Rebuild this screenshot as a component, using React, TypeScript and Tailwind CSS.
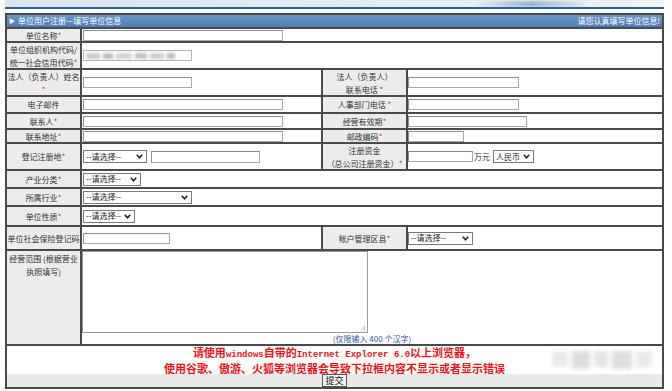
import React from "react";

const Star = () => <span className="text-[#e8202a]">*</span>;

const Chevron = () => (
  <svg width="7" height="5" viewBox="0 0 7 5" className="shrink-0">
    <polyline points="0.8,0.8 3.5,3.8 6.2,0.8" fill="none" stroke="#222" strokeWidth="1.6" />
  </svg>
);

function Input({ cls }: { cls: string }) {
  return <div className={"h-[11px] border border-[#a9a9a9] border-t-[#8f8f8f] border-l-[#8f8f8f] bg-white " + cls} />;
}

function Select({ cls, text = "--请选择--" }: { cls: string; text?: string }) {
  return (
    <div
      className={
        "h-[13px] border border-[#7a7a7a] bg-white flex items-center justify-between pl-[2px] pr-[3px] text-[8px] leading-none text-[#222] " +
        cls
      }
    >
      <span>{text}</span>
      <Chevron />
    </div>
  );
}

function L1({ children, top = false }: { children: React.ReactNode; top?: boolean }) {
  return (
    <div
      className={
        "w-[73px] shrink-0 bg-[#ececec] flex justify-center text-center leading-[13px] whitespace-nowrap " +
        (top ? "items-start pt-[1px]" : "items-center")
      }
    >
      <div>{children}</div>
    </div>
  );
}

function L2({ children }: { children: React.ReactNode }) {
  return (
    <div className="w-[85px] shrink-0 border-l-2 border-[#4a4a4a] bg-[#ececec] flex items-center justify-center text-center leading-[13px] whitespace-nowrap">
      <div>{children}</div>
    </div>
  );
}

function V1({ children, full = false }: { children?: React.ReactNode; full?: boolean }) {
  return (
    <div
      className={
        "border-l-2 border-[#4a4a4a] bg-white flex items-center pl-px " + (full ? "flex-1" : "w-[241px] shrink-0")
      }
    >
      {children}
    </div>
  );
}

function V2({ children }: { children?: React.ReactNode }) {
  return <div className="flex-1 border-l-2 border-[#4a4a4a] bg-white flex items-center">{children}</div>;
}

function Row({ h, children }: { h: string; children: React.ReactNode }) {
  return <div className={"flex border-t-2 border-[#4a4a4a] " + h}>{children}</div>;
}

export default function App() {
  return (
    <div
      className="w-[672px] h-[391px] bg-white text-[8px] text-[#333] overflow-hidden"
      style={{ fontFamily: '"Noto Sans CJK SC", "Noto Sans", sans-serif' }}
    >
      {/* top banner */}
      <div className="ml-[5px] w-[659px]">
        <div className="relative h-[7px] bg-gradient-to-r from-[#d9e6f2] via-[#e3ecf5] to-[#eef3f8] overflow-hidden">
          <div className="absolute left-[470px] top-[1px] w-[110px] h-[6px] rounded-full bg-gradient-to-r from-[#e8eef5] via-[#9fb4c9] to-[#dfe9f2] blur-[1px]" />
        </div>
        <div className="h-[2px] bg-[#2e5f97]" />
        <div className="h-[4px] bg-white" />
      </div>

      {/* table */}
      <div className="ml-[5px] w-[659px] border-2 border-[#4a4a4a]">
        <div className="h-[12px] bg-gradient-to-b from-[#6b96c8] to-[#4e7db6] flex items-center justify-between px-[2px] text-white leading-none">
          <span className="flex items-center gap-[3px]">
            <span className="text-[6px]">▶</span>
            <span>单位用户注册—填写单位信息</span>
          </span>
          <span>请您认真填写单位信息!</span>
        </div>

        <Row h="h-[14px]">
          <L1>
            单位名称<Star />
          </L1>
          <V1 full>
            <Input cls="w-[200px]" />
          </V1>
        </Row>

        <Row h="h-[27px]">
          <L1>
            单位组织机构代码/
            <br />
            统一社会信用代码<Star />
          </L1>
          <V1 full>
            <div className="relative h-[11px] w-[109px] border border-[#b5b5b5] bg-white overflow-hidden">
              <div className="absolute left-[2px] top-[2px] flex gap-[3px] blur-[1.5px]">
                <div className="w-[14px] h-[6px] bg-[#c9c9c9]" />
                <div className="w-[10px] h-[6px] bg-[#bdbdbd]" />
                <div className="w-[16px] h-[6px] bg-[#d2d2d2]" />
                <div className="w-[12px] h-[6px] bg-[#c2c2c2]" />
                <div className="w-[14px] h-[6px] bg-[#cfcfcf]" />
                <div className="w-[8px] h-[6px] bg-[#bcbcbc]" />
              </div>
            </div>
          </V1>
        </Row>

        <Row h="h-[27px]">
          <L1>
            法人（负责人）姓名
            <br />
            <Star />
          </L1>
          <V1>
            <Input cls="w-[109px]" />
          </V1>
          <L2>
            法人（负责人）
            <br />
            联系电话 <Star />
          </L2>
          <V2>
            <Input cls="w-[111px]" />
          </V2>
        </Row>

        <Row h="h-[17px]">
          <L1>电子邮件</L1>
          <V1>
            <Input cls="w-[200px]" />
          </V1>
          <L2>
            人事部门电话 <Star />
          </L2>
          <V2>
            <Input cls="w-[111px]" />
          </V2>
        </Row>

        <Row h="h-[16px]">
          <L1>
            联系人<Star />
          </L1>
          <V1>
            <Input cls="w-[200px]" />
          </V1>
          <L2>
            经营有效期<Star />
          </L2>
          <V2>
            <Input cls="w-[119px]" />
          </V2>
        </Row>

        <Row h="h-[14px]">
          <L1>
            联系地址<Star />
          </L1>
          <V1>
            <Input cls="w-[200px]" />
          </V1>
          <L2>
            邮政编码<Star />
          </L2>
          <V2>
            <Input cls="w-[56px]" />
          </V2>
        </Row>

        <Row h="h-[27px]">
          <L1>
            登记注册地<Star />
          </L1>
          <V1>
            <div className="flex items-center gap-[4px]">
              <Select cls="w-[64px]" />
              <Input cls="w-[109px] h-[12px]" />
            </div>
          </V1>
          <L2>
            注册资金
            <br />
            （总公司注册资金）<Star />
          </L2>
          <V2>
            <div className="flex items-center">
              <Input cls="w-[65px]" />
              <span className="ml-px">万元</span>
              <Select cls="w-[41px] ml-[3px]" text="人民币" />
            </div>
          </V2>
        </Row>

        <Row h="h-[18px]">
          <L1>
            产业分类<Star />
          </L1>
          <V1 full>
            <Select cls="w-[58px]" />
          </V1>
        </Row>

        <Row h="h-[18px]">
          <L1>
            所属行业<Star />
          </L1>
          <V1 full>
            <Select cls="w-[109px]" />
          </V1>
        </Row>

        <Row h="h-[20px]">
          <L1>
            单位性质<Star />
          </L1>
          <V1 full>
            <Select cls="w-[52px]" />
          </V1>
        </Row>

        <Row h="h-[24px]">
          <L1>单位社会保险登记码</L1>
          <V1>
            <Input cls="w-[87px]" />
          </V1>
          <L2>
            帐户管理区县<Star />
          </L2>
          <V2>
            <Select cls="w-[65px]" />
          </V2>
        </Row>

        <Row h="h-[95px]">
          <L1 top>
            经营范围 (根据营业
            <br />
            执照填写)
          </L1>
          <div className="flex-1 border-l-2 border-[#4a4a4a] bg-white flex flex-col">
            <div className="relative w-[286px] h-[82px] border border-[#9a9a9a] bg-white">
              <svg width="6" height="6" viewBox="0 0 6 6" className="absolute right-[1px] bottom-[1px]">
                <line x1="5.5" y1="1" x2="1" y2="5.5" stroke="#999" strokeWidth="0.8" />
                <line x1="5.5" y1="3.5" x2="3.5" y2="5.5" stroke="#999" strokeWidth="0.8" />
              </svg>
            </div>
            <div className="text-center text-[#3350a8] leading-[10px] mt-[1px]">(仅限输入 400 个汉字)</div>
          </div>
        </Row>

        <div className="relative h-[30px] border-t-2 border-[#4a4a4a] bg-white flex flex-col items-center justify-center text-[11px] font-bold text-[#e8141c] leading-[13px]">
          <div>
            请使用
            <span className="text-[9px]" style={{ fontFamily: '"Liberation Mono", monospace' }}>windows</span>
            自带的
            <span className="text-[9px]" style={{ fontFamily: '"Liberation Mono", monospace' }}>Internet Explorer 6.0</span>
            以上浏览器，
          </div>
          <div>使用谷歌、傲游、火狐等浏览器会导致下拉框内容不显示或者显示错误</div>
          <div className="absolute left-[545px] top-[5px] flex gap-[4px] blur-[2px] opacity-70">
            <div className="w-[16px] h-[16px] bg-[#e2e2e2]" />
            <div className="w-[18px] h-[18px] bg-[#d0d0d0]" />
            <div className="w-[14px] h-[16px] bg-[#dadada]" />
            <div className="w-[20px] h-[18px] bg-[#cfcfcf]" />
            <div className="w-[16px] h-[16px] bg-[#e0e0e0]" />
          </div>
        </div>

        <div className="h-[13px] bg-[#e9e9e9] flex items-center justify-center">
          <div className="h-[13px] px-[2px] border border-[#555] bg-[#f4f4f4] text-[9px] leading-[11px] text-[#111]">
            提交
          </div>
        </div>
      </div>
    </div>
  );
}
